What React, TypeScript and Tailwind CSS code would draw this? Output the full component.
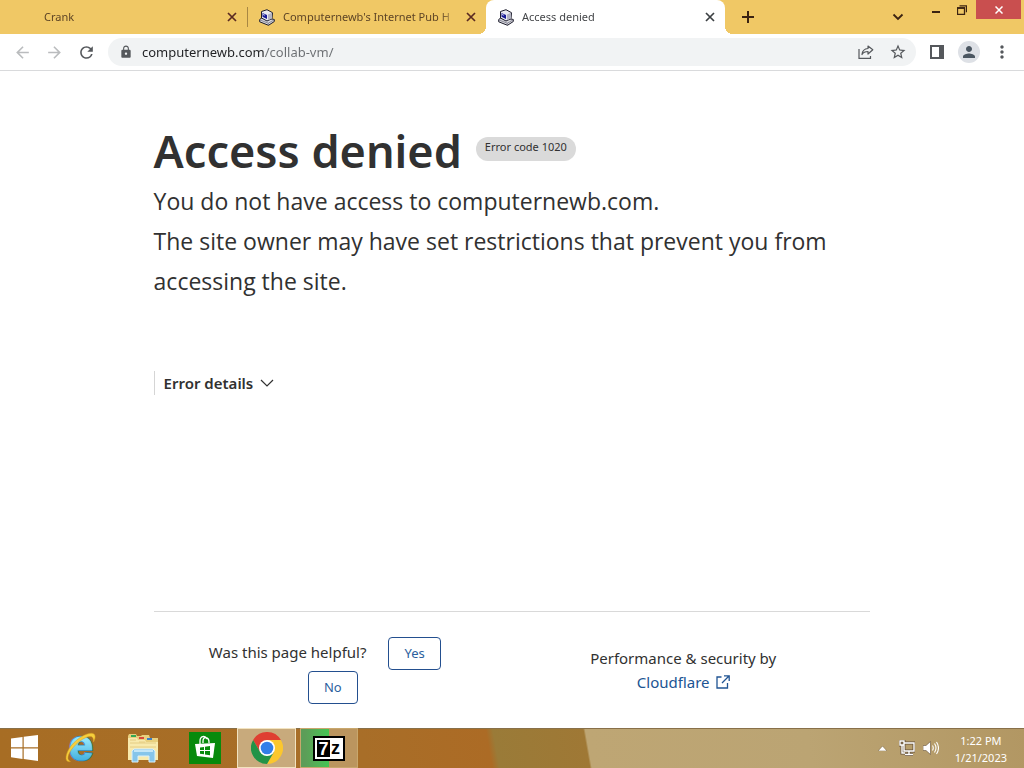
import React, { useState } from "react";
import { MdArrowBack, MdArrowForward, MdLock, MdMoreVert, MdPerson, MdRefresh, MdStarBorder } from "react-icons/md";

const font = "font-['Segoe_UI','Noto_Sans','Open_Sans',sans-serif]";

function ComputerIcon() {
  return (
    <svg width="16" height="17" viewBox="0 0 16 17" className="shrink-0" aria-hidden="true">
      <path d="M.7 10.500L4 8l11.300 2.500v2L9.500 16.300.7 12.800z" fill="#d8d8dc" stroke="#1c1c2c" strokeWidth="1" />
      <path d="M1 11l8.300 3.200L15 11M9.300 14v2" stroke="#77778a" strokeWidth=".8" fill="none" />
      <path d="M2.500 2.500L8 .7l5.500 3-.5 6L8 12 2.500 9z" fill="#e9e9ee" stroke="#1c1c2c" />
      <path d="M9 5.500l4-1.800V9.500L9 11.300z" fill="#b4b4c2" />
      <path d="M3.500 4L8 6v4L3.500 7.800z" fill="#191b96" />
      <path d="M4.200 5l1.500.7v1l-1.500-.6z" fill="#fff" />
    </svg>
  );
}

function CloseIcon() {
  return (
    <svg width="10" height="10" viewBox="0 0 10 10" aria-hidden="true">
      <path d="M1 1l8 8M9 1L1 9" stroke="currentColor" strokeWidth="1.700" />
    </svg>
  );
}

const activeTab =
  "relative rounded-t-lg bg-white text-[#45474a] before:absolute before:-left-2 before:bottom-0 before:size-2 before:bg-[radial-gradient(circle_at_0_0,transparent_8px,#fff_8px)] after:absolute after:-right-2 after:bottom-0 after:size-2 after:bg-[radial-gradient(circle_at_100%_0,transparent_8px,#fff_8px)]";

function Tab({ title, icon, active }: { title: string; icon?: boolean; active?: boolean }) {
  return (
    <div className={`flex h-[34px] w-[239px] min-w-0 items-center pl-3 pr-[10px] ${active ? activeTab : "text-[#5e4526]"}`}>
      <div className="flex w-6 shrink-0">{icon && <ComputerIcon />}</div>
      <button className="min-w-0 flex-1 whitespace-nowrap text-left text-[11px] leading-5 mask-r-from-90%">{title}</button>
      <button aria-label={`Close ${title}`} className={active ? "ml-2 text-[#3c4043]" : "ml-2 text-[#5a2a22]"}>
        <CloseIcon />
      </button>
    </div>
  );
}

function TabStrip() {
  return (
    <div className="flex h-[34px] bg-[#f0c865]">
      <div className="flex min-w-0 flex-1 items-center pl-2">
        <Tab title="Crank" />
        <div className="-mr-px h-5 w-px shrink-0 bg-[#a88743]" />
        <Tab title="Computernewb's Internet Pub H" icon />
        <Tab title="Access denied" icon active />
        <button aria-label="New tab" className="ml-[17px] shrink-0 text-[#3b2312]">
          <svg width="12" height="12" viewBox="0 0 12 12">
            <path d="M6 0v12M0 6h12" stroke="currentColor" strokeWidth="2" />
          </svg>
        </button>
      </div>
      <div className="flex shrink-0 items-start pr-[3px] text-[#3b2312]">
        <button aria-label="Search tabs" className="mr-5 self-center">
          <svg width="12" height="8" viewBox="0 0 12 8">
            <path d="M1.500 1.500L6 6l4.500-4.500" fill="none" stroke="currentColor" strokeWidth="1.800" />
          </svg>
        </button>
        <button aria-label="Minimize" className="flex h-[19px] w-6 items-center justify-center">
          <svg width="10" height="10" viewBox="0 0 10 10">
            <path d="M1 7h8" stroke="currentColor" strokeWidth="2" />
          </svg>
        </button>
        <button aria-label="Restore" className="flex h-[19px] w-7 items-center justify-center">
          <svg width="10" height="10" viewBox="0 0 10 10" fill="none" stroke="currentColor">
            <path d="M.5 3h7v6.500h-7z" strokeWidth="1.300" />
            <path d="M0 3h8" strokeWidth="1.600" />
            <path d="M2.500.8h7v6.500" strokeWidth="1.300" />
          </svg>
        </button>
        <button aria-label="Close window" className="flex h-[19px] w-[45px] items-center justify-center bg-[#c94f4f] text-white">
          <svg width="8" height="8" viewBox="0 0 8 8">
            <path d="M.5.5l7 7M7.500.5l-7 7" stroke="currentColor" strokeWidth="1.500" />
          </svg>
        </button>
      </div>
    </div>
  );
}

function Toolbar() {
  const [url, setUrl] = useState("computernewb.com/collab-vm/");

  return (
    <div className="flex h-[37px] items-center border-b border-[#d9dadc] bg-white pl-[13px] pr-3 text-[#55585c]">
      <div className="flex shrink-0 items-center gap-[13px]">
        <button aria-label="Back" className="text-[#babcbe]"><MdArrowBack size={19} /></button>
        <button aria-label="Forward" className="text-[#babcbe]"><MdArrowForward size={19} /></button>
        <button aria-label="Reload"><MdRefresh size={19} /></button>
      </div>
      <div className="ml-3 flex h-7 min-w-0 flex-1 items-center rounded-full bg-[#f1f3f4] pl-[11px] pr-[9px]">
        <MdLock size={14} className="shrink-0" />
        <input
          aria-label="Address"
          value={url}
          onChange={(e) => setUrl(e.target.value)}
          className="ml-[9px] min-w-0 flex-1 bg-linear-to-r from-[#202124] from-[123px] to-[#6b6e72] to-[123px] bg-clip-text text-[13px] leading-5 text-transparent caret-black outline-none"
        />
        <button aria-label="Share" className="mr-[15px]">
          <svg width="16" height="16" viewBox="0 0 16 16" fill="none" stroke="currentColor" strokeWidth="1.200">
            <path d="M1 5v9.300h11.500V12" />
            <path d="M10 2l4.800 3.700L10 10V7.500c-3 0-4.700.8-6 3 .3-3.600 2.400-5.700 6-6z" strokeLinejoin="round" />
          </svg>
        </button>
        <button aria-label="Bookmark this tab"><MdStarBorder size={18} /></button>
      </div>
      <button aria-label="Side panel" className="ml-[14px]">
        <svg width="14" height="14" viewBox="0 0 14 14">
          <path d="M0 0h14v14H0zM2 2v10h7V2z" fill="currentColor" fillRule="evenodd" />
        </svg>
      </button>
      <button aria-label="Profile" className="ml-[14px] flex size-[22px] items-center justify-center rounded-full bg-[#dee1e6] text-[#4b5661]">
        <MdPerson size={18} />
      </button>
      <button aria-label="Menu" className="ml-3"><MdMoreVert size={20} /></button>
    </div>
  );
}

function Page() {
  const [open, setOpen] = useState(false);
  const choice = "rounded border border-[#234f8f] px-[15px] py-1 text-[13px] leading-[23px] text-[#2c5f9e]";

  return (
    <main className="flex flex-1 flex-col bg-white text-[#313131]">
      <div className="mx-auto flex w-[70%] flex-1 flex-col pt-[50px]">
        <div className="flex items-start">
          <h1 className="text-[45px] font-semibold leading-[60px]">Access denied</h1>
          <span className="ml-[14px] mt-4 rounded-full bg-[#dadada] px-[9px] pb-1 text-[11px] leading-5">Error code 1020</span>
        </div>
        <h2 className="font-['Segoe_UI','Open_Sans',sans-serif] text-[23px] leading-10">
          You do not have access to computernewb.com.
          <br />
          The site owner may have set restrictions that prevent you from accessing the site.
        </h2>
        <div className="mt-[70px] border-l border-[#d5d5d5]">
          <button onClick={() => setOpen(!open)} aria-expanded={open} className="flex items-center pl-[9px] text-[15px] font-semibold leading-6">
            Error details
            <svg width="14" height="8" viewBox="0 0 14 8" className="ml-[7px]">
              <path d="M1 1l6 6 6-6" fill="none" stroke="currentColor" strokeWidth="1.200" />
            </svg>
          </button>
        </div>
        <footer className="mt-auto flex h-[117px] items-start border-t border-[#d9d9d9] text-[15px]">
          <div className="mt-[25px] w-1/2 px-10 text-center">
            <div className="mb-px flex items-start justify-center gap-[22px] pr-4">
              <span className="leading-[30px]">Was this page helpful?</span>
              <button className={choice}>Yes</button>
            </div>
            <button className={choice}>No</button>
          </div>
          <div className="mt-[34px] w-1/2 pr-4 text-center leading-6">
            <p>Performance &amp; security by</p>
            <a href="#cloudflare" className="inline-flex items-center text-[#205493]">
              Cloudflare
              <svg width="14" height="14" viewBox="0 0 14 14" className="ml-[6px]" fill="none" stroke="currentColor" strokeWidth="1.300">
                <path d="M5.500 2H1v11h10.500V8" />
                <path d="M8 .8h5.200V6M13 1L6 8" />
              </svg>
            </a>
          </div>
        </footer>
      </div>
    </main>
  );
}

function StartIcon() {
  return (
    <svg width="28" height="26" viewBox="0 0 28 26" fill="#fff">
      <path d="M0 3.500L11.500 2v10.300H0zM12.700 1.800L27 0v12.300H12.700zM0 13.500h11.500V24L0 22.300zM12.700 13.500H27V26l-14.300-1.900z" />
    </svg>
  );
}

function ExplorerEIcon() {
  return (
    <svg width="32" height="32" viewBox="0 0 32 32" className="overflow-visible">
      <defs>
        <linearGradient id="ie" x1="0" y1="0" x2="0" y2="1">
          <stop offset="0.4" stopColor="#8fe3fb" />
          <stop offset="1" stopColor="#249bd2" />
        </linearGradient>
      </defs>
      <text x="4" y="28" fontFamily="Liberation Sans, sans-serif" fontWeight="700" fontSize="43" fill="#56bde8" stroke="#2b7fae" strokeWidth="2.600">e</text>
      <text x="4" y="28" fontFamily="Liberation Sans, sans-serif" fontWeight="700" fontSize="43" fill="url(#ie)" stroke="url(#ie)" strokeWidth="1.200">e</text>
      <path d="M5.500 29.500C-1 31 0 22 6 14 13 5 25-1 29 2c2 2 1 5-.5 8 .2-4-1-6-4-5.500C16 5.500 4 18 3 25c-.3 2 .5 3.500 2.500 4.500z" fill="#f6cf3c" stroke="#d79f1f" strokeWidth=".5" />
    </svg>
  );
}

function FolderIcon() {
  return (
    <svg width="32" height="30" viewBox="0 0 32 30">
      <path d="M1 3l1-2h7l1 2h4l1-1h7l1 3h8v22H1z" fill="#e8cf7d" />
      <path d="M4 2h5v2H4z" fill="#35a853" />
      <path d="M12 4h5v2h-5z" fill="#d84a3b" />
      <path d="M20 5h5v2h-5z" fill="#3b7fc8" />
      <path d="M1 5h9l1 2h7l1 2h12v18H1z" fill="#f8eaad" />
      <path d="M3 7h6M12 9h6M3 10h26M3 14h26" stroke="#e0c67a" strokeWidth=".8" />
      <path d="M5 18l2-2h19l2 2v11h-6v-6H11v6H5z" fill="#86c5ea" stroke="#d9f0fb" />
      <path d="M7 18h19" stroke="#d9f0fb" strokeWidth="1.500" />
    </svg>
  );
}

function StoreIcon() {
  return (
    <svg width="32" height="32" viewBox="0 0 32 32">
      <path d="M0 0h32v32H0z" fill="#078a0c" />
      <path d="M11 12V9c0-5 5-6 7-2M14 11V9c0-5 6-4 6 1v1" fill="none" stroke="#fff" strokeWidth="1.300" />
      <path d="M6 12l20-1-2 15-16-2z" fill="#fff" />
      <path d="M11 15.500l4-.6V18h-4zM16 14.700l5-.7v4h-5zM11 19h4v3.300l-4-.6zM16 19h5v4.200l-5-.8z" fill="#078a0c" />
    </svg>
  );
}

function ChromeIcon() {
  return (
    <svg width="32" height="32" viewBox="0 0 32 32">
      <path d="M16 8h13.860A16 16 0 0 1 16 32l6.900-12z" fill="#fbc72e" />
      <path d="M16 8h13.860A16 16 0 0 0 2.140 8l7 12z" fill="#df3f32" />
      <path d="M2.140 8l7 12L16 24l6.900-4L16 32A16 16 0 0 1 2.140 8z" fill="#229347" />
      <circle cx="16" cy="16" r="8" fill="#fff" />
      <circle cx="16" cy="16" r="6.300" fill="#317ee8" />
    </svg>
  );
}

function Taskbar() {
  return (
    <nav className="flex h-10 items-stretch bg-[linear-gradient(80deg,#a76d24_0px,#a86e28_360px,#ac6b25_485px,#9a7b38_492px,#9f7835_581px,#bea674_583px,#bba473_800px,#b29763_100%)] shadow-[inset_0_1px_0_#88704a]">
      <div className="flex min-w-0 flex-1">
        <button aria-label="Start" className="flex w-[50px] items-center justify-center"><StartIcon /></button>
        <button aria-label="Internet Explorer" className="flex w-[62px] items-center justify-center"><ExplorerEIcon /></button>
        <button aria-label="File Explorer" className="flex w-[62px] items-center justify-center"><FolderIcon /></button>
        <button aria-label="Store" className="flex w-[62px] items-center justify-center"><StoreIcon /></button>
        <button aria-label="Google Chrome" className="ml-px flex w-[59px] items-center justify-center border border-[#f2e3c0] bg-[#c8aa7c]"><ChromeIcon /></button>
        <button aria-label="7-Zip" className="ml-1 flex w-[58px] items-center justify-center border border-[#c8a76d] bg-linear-to-r from-[#5c9d58] from-[4px] via-[#42c653] via-[28px] to-[#bb955f] to-[28px]">
          <span className="flex h-[25px] w-8 items-center justify-center border-2 border-black bg-white font-['Liberation_Sans',sans-serif] font-bold">
            <span className="h-[17px] w-[13px] bg-black text-[18px] leading-[18px] text-white">7</span>
            <span className="w-[11px] text-[18px] leading-[18px] text-black">z</span>
          </span>
        </button>
      </div>
      <div className="flex shrink-0 items-center pr-[17px] text-white">
        <button aria-label="Show hidden icons" className="mr-3">
          <svg width="9" height="5" viewBox="0 0 9 5"><path d="M4.500 0L9 5H0z" fill="#fff" stroke="#705c3b" strokeWidth=".5" /></svg>
        </button>
        <button aria-label="Network" className="mr-2">
          <svg width="16" height="16" viewBox="0 0 16 16" fill="none">
            <path d="M5 3h10v8H5zM10 11v3M6 14.500h8M1 1h4v4H1zM3 5v8h3" stroke="#65513a" strokeWidth="3" />
            <path d="M5 3h10v8H5zM10 11v3M6 14.500h8M1 1h4v4H1zM3 5v8h3" stroke="#fff" strokeWidth="1.400" />
          </svg>
        </button>
        <button aria-label="Volume" className="mr-4">
          <svg width="16" height="14" viewBox="0 0 16 14" fill="none">
            <path d="M0 4.500h3L7.500.5v13L3 9.500H0z" fill="#fff" stroke="#65513a" strokeWidth=".6" />
            <path d="M9.500 4.500q1.500 2.500 0 5M11.500 2.500q3 4.500 0 9M13.500 1q4 6 0 12" stroke="#fff" strokeWidth="1.100" />
          </svg>
        </button>
        <div className="pt-px text-center text-[11px] leading-[17px]">
          <div>1:22 PM</div>
          <div>1/21/2023</div>
        </div>
      </div>
    </nav>
  );
}

export default function App() {
  return (
    <div className={`flex min-h-screen flex-col ${font}`}>
      <header>
        <TabStrip />
        <Toolbar />
      </header>
      <Page />
      <Taskbar />
    </div>
  );
}
